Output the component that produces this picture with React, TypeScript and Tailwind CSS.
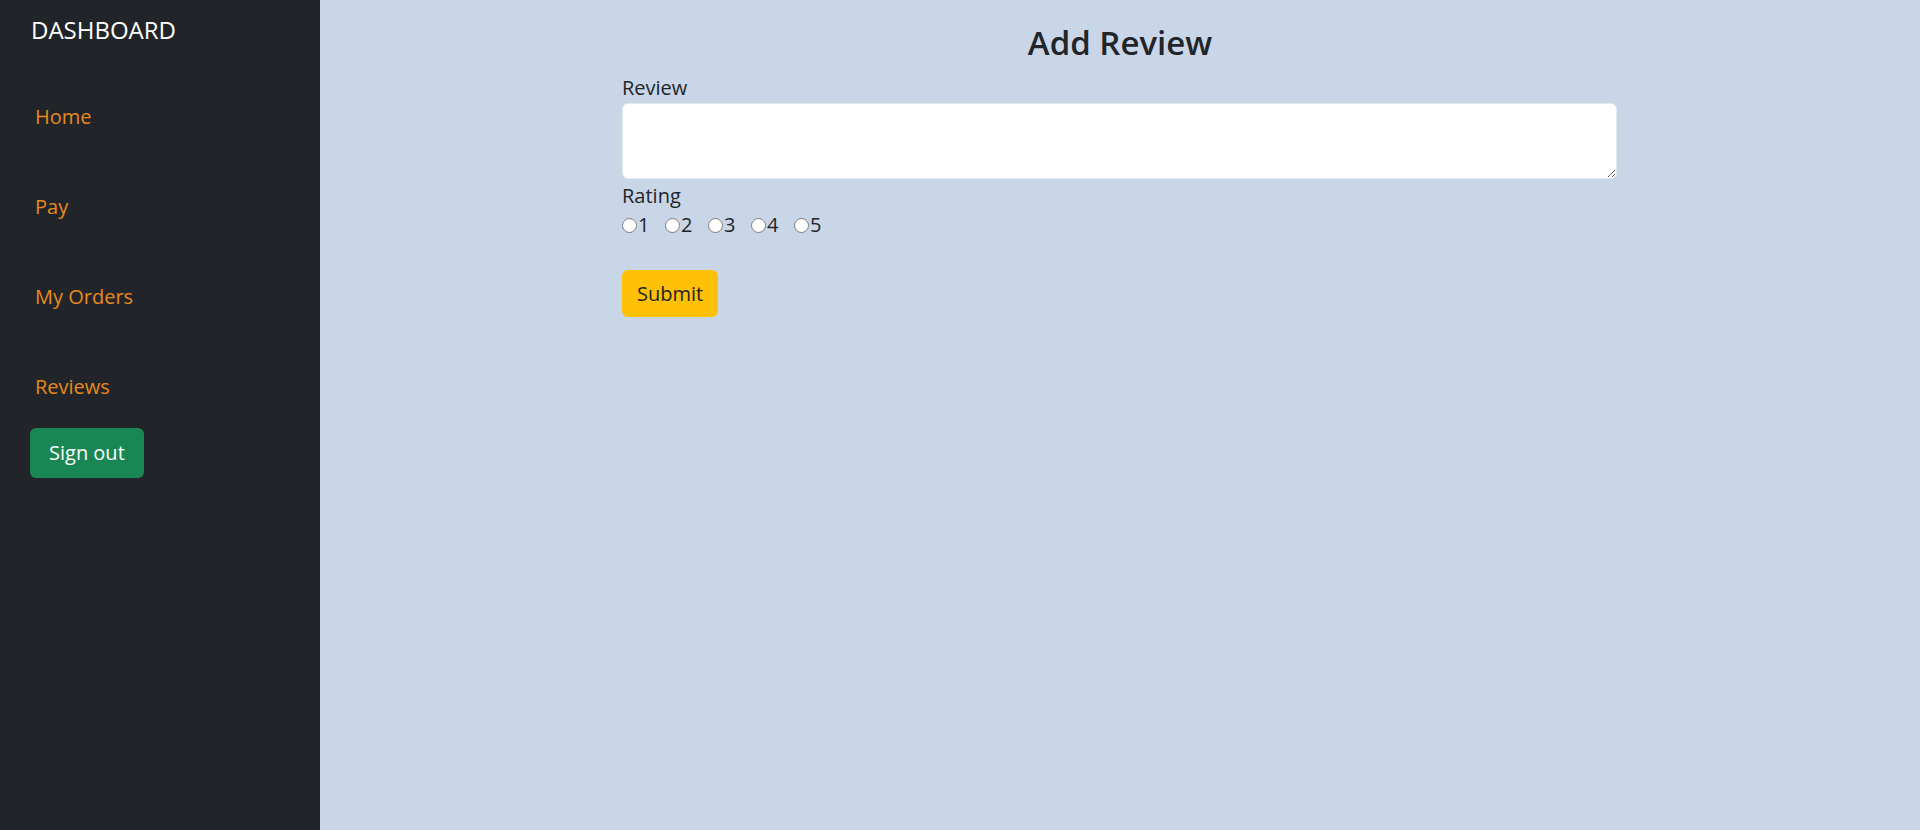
import { useState } from 'react';

const links = ['Home', 'Pay', 'My Orders', 'Reviews'];

function Sidebar() {
  return (
    <aside className="w-[320px] shrink-0 bg-[#212529] pl-[30px]">
      <h1 className="pt-[12px] pl-[1px] text-[24px] leading-[36px] text-white">DASHBOARD</h1>
      <nav className="flex flex-col pt-[54px]">
        {links.map((label, i) => (
          <a
            key={label}
            href="#"
            className={`${i > 0 ? 'mt-[60px]' : ''} pl-[5px] text-[20px] leading-[30px] text-[#e8891c]`}
          >
            {label}
          </a>
        ))}
      </nav>
      <button className="mt-[26px] h-[50px] rounded-[6px] bg-[#198754] px-[19px] text-[20px] text-white">
        Sign out
      </button>
    </aside>
  );
}

export default function App() {
  const [rating, setRating] = useState<string>('');

  return (
    <div className="flex min-h-[830px] font-['Open_Sans',sans-serif] text-[#212529]">
      <Sidebar />
      <main className="flex-1 bg-[#c9d6e7]">
        <h2 className="pt-[21px] text-center text-[33px] font-semibold leading-[44px]">Add Review</h2>
        <form className="ml-[302px] mt-[8px] w-[995px]" onSubmit={(e) => e.preventDefault()}>
          <label className="block text-[20px] leading-[30px]">Review</label>
          <textarea className="block h-[76px] w-full rounded-[6px] border border-[#e3e8ee] bg-white" />
          <label className="mt-[2px] block text-[20px] leading-[30px]">Rating</label>
          <div className="flex h-[28px] items-center">
            {['1', '2', '3', '4', '5'].map((n) => (
              <label key={n} className="flex w-[43px] items-center text-[20px] leading-[28px]">
                <input
                  type="radio"
                  name="rating"
                  value={n}
                  checked={rating === n}
                  onChange={() => setRating(n)}
                  className="m-0 mr-[1px] h-[15px] w-[15px]"
                />
                {n}
              </label>
            ))}
          </div>
          <button type="submit" className="mt-[31px] h-[47px] rounded-[6px] bg-[#ffc107] px-[15px] text-[20px]">
            Submit
          </button>
        </form>
      </main>
    </div>
  );
}
